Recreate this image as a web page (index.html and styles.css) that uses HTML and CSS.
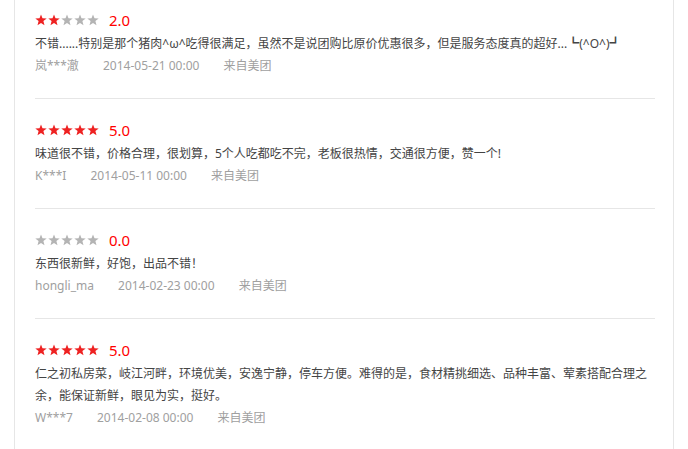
FILE: index.html
```html
<!DOCTYPE html>
<html lang="zh-CN">
<head>
    <meta charset="UTF-8">
    <title>评价列表</title>
    <link rel="stylesheet" href="styles.css">
</head>
<body>
    <svg width="0" height="0" class="defs">
        <defs>
            <polygon id="star" points="6,0.4 7.5,4.3 11.7,4.5 8.4,7.1 9.5,11.2 6,8.9 2.5,11.2 3.6,7.1 0.3,4.5 4.5,4.3"/>
        </defs>
    </svg>

    <div class="comments">
        <div class="item">
            <div class="rate">
                <span class="stars" data-score="2"></span>
                <span class="score">2.0</span>
            </div>
            <p class="text">不错......特别是那个猪肉^ω^吃得很满足，虽然不是说团购比原价优惠很多，但是服务态度真的超好...┗(^O^)┛</p>
            <div class="meta">
                <span>岚***澈</span>
                <span>2014-05-21 00:00</span>
                <span>来自美团</span>
            </div>
        </div>

        <div class="item">
            <div class="rate">
                <span class="stars" data-score="5"></span>
                <span class="score">5.0</span>
            </div>
            <p class="text">味道很不错，价格合理，很划算，5个人吃都吃不完，老板很热情，交通很方便，赞一个!</p>
            <div class="meta">
                <span>K***I</span>
                <span>2014-05-11 00:00</span>
                <span>来自美团</span>
            </div>
        </div>

        <div class="item">
            <div class="rate">
                <span class="stars" data-score="0"></span>
                <span class="score">0.0</span>
            </div>
            <p class="text">东西很新鲜，好饱，出品不错！</p>
            <div class="meta">
                <span>hongli_ma</span>
                <span>2014-02-23 00:00</span>
                <span>来自美团</span>
            </div>
        </div>

        <div class="item">
            <div class="rate">
                <span class="stars" data-score="5"></span>
                <span class="score">5.0</span>
            </div>
            <p class="text">仁之初私房菜，岐江河畔，环境优美，安逸宁静，停车方便。难得的是，食材精挑细选、品种丰富、荤素搭配合理之余，能保证新鲜，眼见为实，挺好。</p>
            <div class="meta">
                <span>W***7</span>
                <span>2014-02-08 00:00</span>
                <span>来自美团</span>
            </div>
        </div>
    </div>

    <script>
        // Fill each star row according to its score
        document.querySelectorAll(".stars").forEach(function (el) {
            const score = parseInt(el.dataset.score, 10);
            let html = "";
            for (let i = 0; i < 5; i++) {
                const cls = i < score ? "on" : "off";
                html += '<svg class="star ' + cls + '" viewBox="0 0 12 12"><use href="#star"/></svg>';
            }
            el.innerHTML = html;
        });
    </script>
</body>
</html>
```

FILE: styles.css
```css
* {
    margin: 0;
    padding: 0;
    box-sizing: border-box;
}
body {
    font-family: "Noto Sans", "Noto Sans CJK SC", sans-serif;
    background: #fff;
    color: #444;
    font-size: 12px;
}
.defs {
    position: absolute;
}
.comments {
    margin-left: 14px;
    width: 660px;
    min-height: 449px;
    border-left: 1px solid #e6e6e6;
    border-right: 1px solid #e6e6e6;
    padding: 0 18px 0 20px;
}
.item {
    padding: 18px 0 21px;
    border-bottom: 1px solid #e6e6e6;
}
.item:first-child {
    padding-top: 7px;
}
.rate {
    display: flex;
    align-items: center;
    height: 26px;
}
.stars {
    display: flex;
    gap: 1px;
}
.star {
    width: 12px;
    height: 12px;
}
.star.on {
    fill: #ee2222;
}
.star.off {
    fill: #b4b4b4;
}
.score {
    margin-left: 10px;
    font-size: 15px;
    color: #ff0000;
    line-height: 26px;
}
.text {
    line-height: 22px;
}
.meta {
    line-height: 22px;
    color: #a0a0a0;
}
.meta span {
    margin-right: 21px;
}
```
